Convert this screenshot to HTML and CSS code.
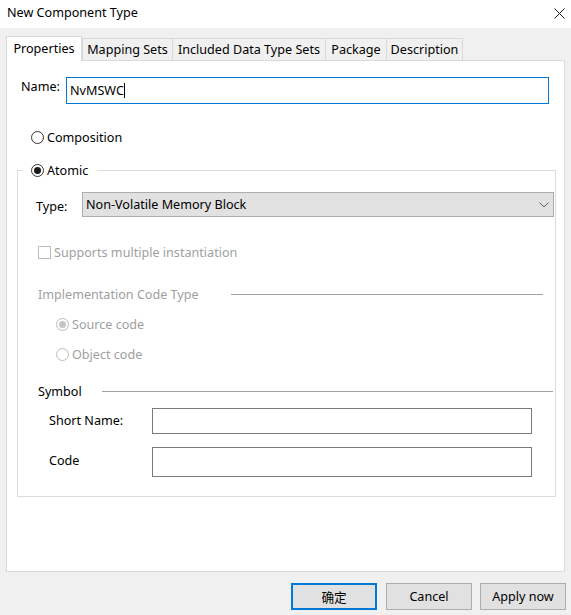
FILE: index.html
```html
<!DOCTYPE html>
<html>
  <head>
    <title>New Component Type</title>
    <link rel="stylesheet" href="styles.css">
  </head>
  <body>
    <div class="dialog">
      <div class="titlebar">
        <span class="title">New Component Type</span>
        <span class="close">
          <svg width="11" height="11" viewBox="0 0 11 11">
            <path d="M0.5 0.5 L10.5 10.5 M10.5 0.5 L0.5 10.5" stroke="#1a1a1a" stroke-width="1" fill="none" />
          </svg>
        </span>
      </div>

      <div class="body">
        <div class="tabs">
          <div class="tab active tab-properties">Properties</div>
          <div class="tab first tab-mapping">Mapping Sets</div>
          <div class="tab tab-included">Included Data Type Sets</div>
          <div class="tab tab-package">Package</div>
          <div class="tab tab-description">Description</div>
        </div>

        <div class="panel">
          <div class="name-row">
            <label class="name-label">Name:</label>
            <div class="text-box focused">NvMSWC<span class="caret"></span></div>
          </div>

          <div class="option composition">
            <span class="radio"></span>
            <span>Composition</span>
          </div>

          <fieldset class="group">
            <legend class="option">
              <span class="radio checked"></span>
              <span>Atomic</span>
            </legend>

            <div class="type-row">
              <label class="type-label">Type:</label>
              <div class="combo">
                <span>Non-Volatile Memory Block</span>
                <svg width="10" height="6" viewBox="0 0 10 6">
                  <path d="M0.5 0.5 L5 5 L9.5 0.5" stroke="#606060" stroke-width="1" fill="none" />
                </svg>
              </div>
            </div>

            <div class="option check-row disabled">
              <span class="checkbox"></span>
              <span>Supports multiple instantiation</span>
            </div>

            <div class="heading impl disabled">
              <span>Implementation Code Type</span>
              <span class="rule"></span>
            </div>

            <div class="option sub-radio source disabled">
              <span class="radio checked"></span>
              <span>Source code</span>
            </div>
            <div class="option sub-radio object disabled">
              <span class="radio"></span>
              <span>Object code</span>
            </div>

            <div class="heading symbol">
              <span>Symbol</span>
              <span class="rule"></span>
            </div>

            <div class="field-row short-name">
              <label class="field-label">Short Name:</label>
              <div class="text-box"></div>
            </div>
            <div class="field-row code">
              <label class="field-label">Code</label>
              <div class="text-box"></div>
            </div>
          </fieldset>
        </div>

        <div class="buttons">
          <button class="btn default">确定</button>
          <button class="btn">Cancel</button>
          <button class="btn">Apply now</button>
        </div>
      </div>
    </div>
  </body>
</html>
```

FILE: styles.css
```css
* {
  box-sizing: border-box;
}

body {
  margin: 0;
  font-family: "Noto Sans", "Noto Sans CJK SC", sans-serif;
  font-size: 12.6px;
  color: #000;
  background: #f0f0f0;
}

.dialog {
  width: 571px;
  height: 615px;
  display: flex;
  flex-direction: column;
}

.titlebar {
  height: 28px;
  background: #fff;
  display: flex;
  align-items: center;
  justify-content: space-between;
  padding: 0 6px 3px 7px;
}

.close {
  display: flex;
  margin-top: 2px;
}

.body {
  flex: 1;
  padding: 8px 6px 0 6px;
}

/* tabs */
.tabs {
  display: flex;
  align-items: flex-end;
  height: 24px;
}

.tab {
  height: 22px;
  display: flex;
  align-items: center;
  justify-content: center;
  border-top: 1px solid #d9d9d9;
  border-right: 1px solid #d9d9d9;
  background: #f0f0f0;
  white-space: nowrap;
}

.tab.first {
  border-left: 1px solid #d9d9d9;
}

.tab.active {
  position: relative;
  z-index: 1;
  height: 25px;
  margin-bottom: -1px;
  padding-bottom: 2px;
  background: #fff;
  border-left: 1px solid #d9d9d9;
  border-right: 1px solid #d9d9d9;
}

.tab-properties {
  width: 76px;
}

.tab-mapping {
  width: 91px;
}

.tab-included {
  width: 153px;
}

.tab-package {
  width: 61px;
}

.tab-description {
  width: 76px;
}

.panel {
  height: 512px;
  background: #fff;
  border: 1px solid #d9d9d9;
}

/* name */
.name-row {
  display: flex;
  align-items: center;
  margin-top: 16px;
  padding-left: 14px;
}

.name-label {
  width: 45px;
  padding-bottom: 8px;
}

.text-box {
  height: 27px;
  border: 1px solid #7a7a7a;
  background: #fff;
  display: flex;
  align-items: center;
  padding-left: 3px;
}

.name-row .text-box {
  width: 483px;
}

.text-box.focused {
  border-color: #0078d7;
}

.caret {
  display: inline-block;
  width: 1px;
  height: 15px;
  background: #000;
}

/* radios and checks */
.option {
  display: flex;
  align-items: center;
  height: 20px;
  gap: 3px;
}

.radio {
  width: 13px;
  height: 13px;
  border: 1px solid #333;
  border-radius: 50%;
  background: #fff;
  display: flex;
  align-items: center;
  justify-content: center;
}

.radio.checked::after {
  content: "";
  width: 7px;
  height: 7px;
  border-radius: 50%;
  background: #1a1a1a;
}

.checkbox {
  width: 13px;
  height: 13px;
  border: 1px solid #bcbcbc;
  background: #fff;
}

.disabled {
  color: #a0a0a0;
}

.disabled .radio {
  border-color: #bcbcbc;
}

.disabled .radio.checked::after {
  background: #c4c4c4;
}

.composition {
  margin-top: 23px;
  margin-left: 24px;
}

/* group box */
.group {
  margin: 14px 8px 0 10px;
  padding: 0 0 19px 0;
  border: 1px solid #dcdcdc;
  min-width: 0;
}

.group legend {
  height: 19px;
  margin-left: 5px;
  padding: 0 9px 0 8px;
}

.type-row {
  display: flex;
  align-items: center;
  margin-top: 12px;
  padding-left: 18px;
  margin-right: 1px;
}

.type-label {
  width: 46px;
  padding-top: 3px;
}

.combo {
  flex: 1;
  height: 25px;
  background: #e1e1e1;
  border: 1px solid #adadad;
  display: flex;
  align-items: center;
  justify-content: space-between;
  padding: 0 4px 0 3px;
}

.combo svg {
  margin-top: 1px;
}

.check-row {
  margin-top: 25px;
  padding-left: 20px;
}

.heading {
  display: flex;
  align-items: center;
  height: 20px;
  padding-left: 20px;
}

.heading .rule {
  flex: 1;
  height: 1px;
  background: #a0a0a0;
}

.impl {
  margin-top: 22px;
  margin-right: 12px;
}

.impl .rule {
  margin-left: 32px;
}

.symbol {
  margin-top: 17px;
  margin-right: 2px;
}

.symbol .rule {
  margin-left: 20px;
}

.sub-radio {
  margin-top: 10px;
  padding-left: 38px;
}

.field-row {
  display: flex;
  align-items: center;
  padding-left: 31px;
}

.field-label {
  width: 103px;
}

.short-name .field-label {
  padding-bottom: 2px;
}

.code .field-label {
  padding-bottom: 4px;
}

.field-row .text-box {
  width: 380px;
}

.short-name {
  margin-top: 7px;
}

.short-name .text-box {
  height: 26px;
}

.code {
  margin-top: 13px;
}

.code .text-box {
  height: 30px;
}

/* buttons */
.buttons {
  display: flex;
  justify-content: flex-end;
  gap: 8px;
  margin-top: 11px;
  margin-right: -1px;
}

.btn {
  width: 86px;
  height: 27px;
  background: #e1e1e1;
  border: 1px solid #adadad;
  font-family: "Noto Sans", "Noto Sans CJK SC", sans-serif;
  font-size: 12.6px;
  color: #000;
  padding: 0;
}

.btn.default {
  border: 2px solid #0078d7;
  margin-right: 1px;
}
```
